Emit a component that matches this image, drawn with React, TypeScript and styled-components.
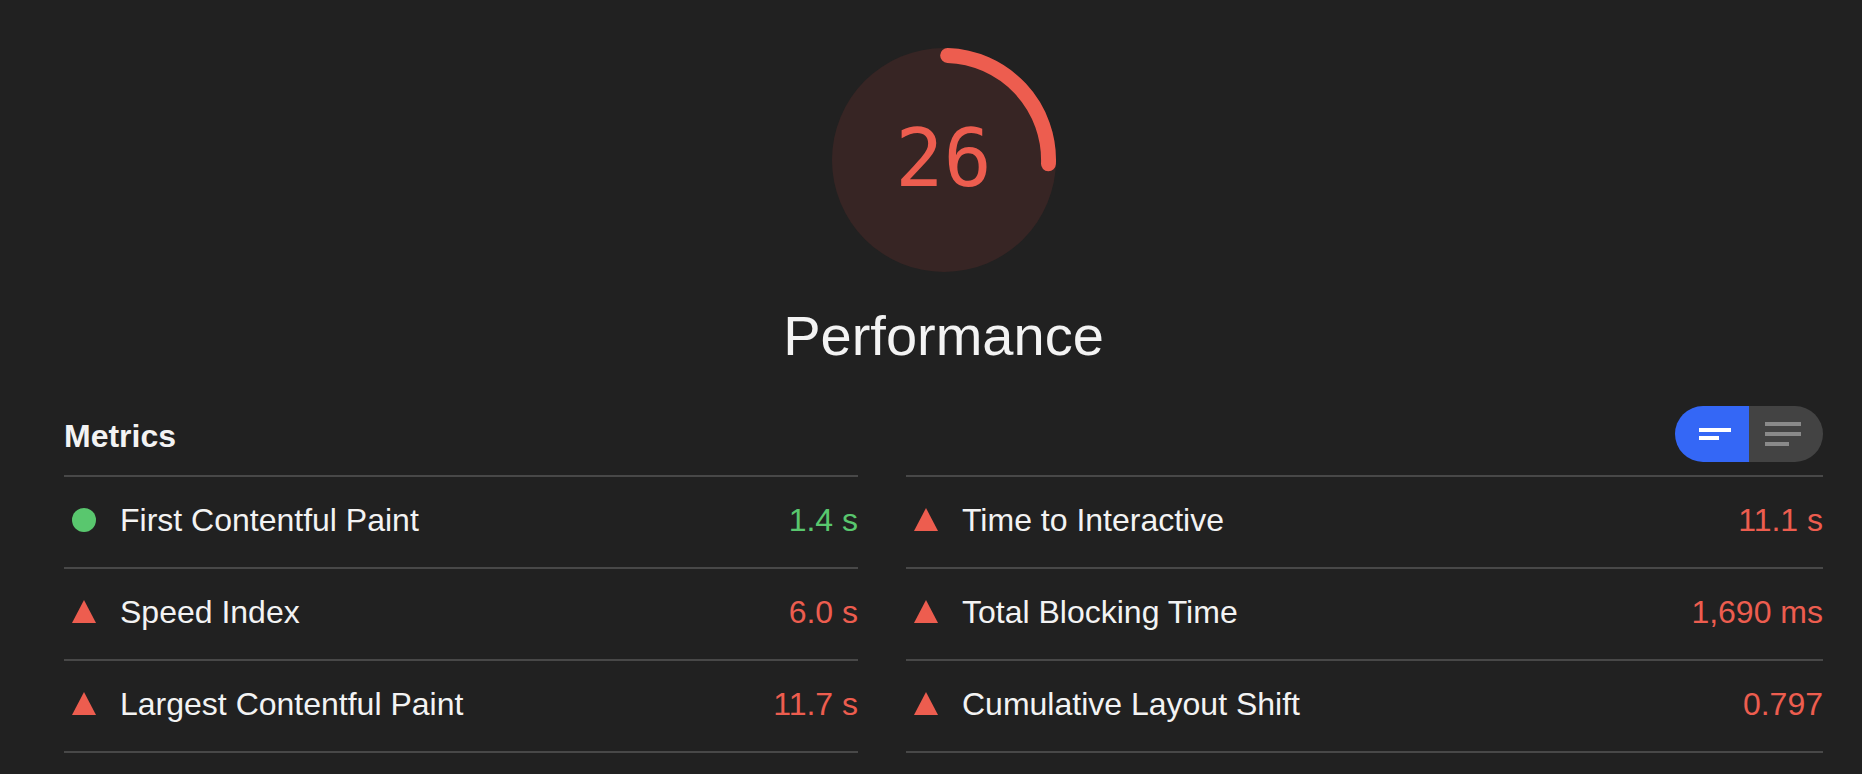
import * as React from 'react'
import styled, { createGlobalStyle } from 'styled-components'

const FAIL = '#ed5d4f'
const PASS = '#59c76e'
const TEXT = '#f3f3f3'
const RULE = '#484848'

const GlobalStyle = createGlobalStyle`
  html, body {
    margin: 0;
    padding: 0;
    background: #212121;
  }
  body {
    font-family: "Liberation Sans", Arial, Helvetica, sans-serif;
    color: ${TEXT};
  }
`

const Page = styled.div`
  display: flex;
  flex-direction: column;
  padding: 48px 39px 0 64px;
  height: 774px;
  box-sizing: border-box;
  overflow: hidden;
`

const GaugeBlock = styled.div`
  display: flex;
  flex-direction: column;
  align-items: center;
`

const GaugeWrap = styled.div`
  position: relative;
  width: 224px;
  height: 224px;
`

const Percentage = styled.span`
  position: absolute;
  inset: 0;
  display: flex;
  align-items: center;
  justify-content: center;
  font-family: "DejaVu Sans Mono", Menlo, monospace;
  font-size: 80px;
  line-height: 1;
  color: ${FAIL};
  padding-bottom: 2px;
`

const GaugeLabel = styled.div`
  margin-top: 36px;
  font-size: 56px;
  line-height: 56px;
  color: ${TEXT};
`

const Header = styled.div`
  display: flex;
  align-items: center;
  justify-content: space-between;
  margin-top: 42px;
  height: 56px;
`

const Title = styled.h2`
  margin: 0;
  font-size: 32px;
  line-height: 32px;
  font-weight: 700;
  padding-top: 3px;
`

const Toggle = styled.div`
  display: flex;
  width: 148px;
  height: 56px;
  border-radius: 28px;
  overflow: hidden;
`

const ToggleHalf = styled.div<{ $active?: boolean }>`
  flex: none;
  width: 74px;
  box-sizing: border-box;
  display: flex;
  flex-direction: column;
  align-items: flex-start;
  justify-content: center;
  gap: ${p => (p.$active ? '4px' : '6px')};
  padding-left: ${p => (p.$active ? '24px' : '16px')};
  background: ${p => (p.$active ? '#3467f6' : '#434343')};
`

const Bar = styled.span<{ $w: number; $active?: boolean }>`
  display: block;
  width: ${p => p.$w}px;
  height: 4px;
  background: ${p => (p.$active ? '#ffffff' : '#8a8a8a')};
`

const Grid = styled.div`
  display: grid;
  grid-template-columns: 794px 1fr;
  column-gap: 48px;
  margin-top: 13px;
`

const Column = styled.div`
  border-top: 2px solid ${RULE};
`

const Row = styled.div`
  display: flex;
  align-items: center;
  height: 92px;
  padding-bottom: 5px;
  box-sizing: border-box;
  border-bottom: 2px solid ${RULE};
  font-size: 32px;
  line-height: 32px;
`

const IconSlot = styled.span`
  display: flex;
  align-items: center;
  justify-content: center;
  width: 24px;
  height: 24px;
  margin-left: 8px;
  margin-right: 24px;
`

const Dot = styled.span`
  display: block;
  width: 24px;
  height: 24px;
  border-radius: 50%;
  background: ${PASS};
`

const Name = styled.span`
  flex: 1;
  color: ${TEXT};
`

const Value = styled.span<{ $pass?: boolean }>`
  color: ${p => (p.$pass ? PASS : FAIL)};
`

type Metric = { name: string; value: string; pass?: boolean }

const left: Metric[] = [
  { name: 'First Contentful Paint', value: '1.4 s', pass: true },
  { name: 'Speed Index', value: '6.0 s' },
  { name: 'Largest Contentful Paint', value: '11.7 s' },
]

const right: Metric[] = [
  { name: 'Time to Interactive', value: '11.1 s' },
  { name: 'Total Blocking Time', value: '1,690 ms' },
  { name: 'Cumulative Layout Shift', value: '0.797' },
]

const Triangle = () => (
  <svg width="24" height="23" viewBox="0 0 24 23">
    <polygon points="12,0 24,23 0,23" fill={FAIL} />
  </svg>
)

const Gauge = ({ score }: { score: number }) => {
  const r = 56
  const c = 2 * Math.PI * r
  const len = 0.25 * c
  return (
    <GaugeWrap>
      <svg width="224" height="224" viewBox="0 0 120 120">
        <circle cx="60" cy="60" r="60" fill="#372524" />
        <circle
          cx="60"
          cy="60"
          r={r}
          fill="none"
          stroke={FAIL}
          strokeWidth="8"
          strokeLinecap="round"
          strokeDasharray={`${len} ${c}`}
          transform="rotate(-88 60 60)"
        />
      </svg>
      <Percentage>{score}</Percentage>
    </GaugeWrap>
  )
}

const MetricRow = ({ m }: { m: Metric }) => (
  <Row>
    <IconSlot>{m.pass ? <Dot /> : <Triangle />}</IconSlot>
    <Name>{m.name}</Name>
    <Value $pass={m.pass}>{m.value}</Value>
  </Row>
)

export default function App() {
  return (
    <>
      <GlobalStyle />
      <Page>
        <GaugeBlock>
          <Gauge score={26} />
          <GaugeLabel>Performance</GaugeLabel>
        </GaugeBlock>
        <Header>
          <Title>Metrics</Title>
          <Toggle>
            <ToggleHalf $active>
              <Bar $w={32} $active />
              <Bar $w={20} $active />
            </ToggleHalf>
            <ToggleHalf>
              <Bar $w={36} />
              <Bar $w={36} />
              <Bar $w={24} />
            </ToggleHalf>
          </Toggle>
        </Header>
        <Grid>
          <Column>
            {left.map(m => (
              <MetricRow key={m.name} m={m} />
            ))}
          </Column>
          <Column>
            {right.map(m => (
              <MetricRow key={m.name} m={m} />
            ))}
          </Column>
        </Grid>
      </Page>
    </>
  )
}
